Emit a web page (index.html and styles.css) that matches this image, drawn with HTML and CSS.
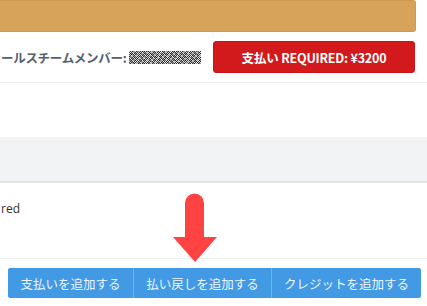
FILE: index.html
```html
<!DOCTYPE html>
<html lang="ja">
<head>
<meta charset="utf-8">
<link rel="stylesheet" href="styles.css">
</head>
<body>
<div class="page">
  <div class="banner"></div>
  <div class="member-row">
    <div class="member">
      <span class="member-label">ールスチームメンバー:</span>
      <span class="masked"></span>
    </div>
    <button class="pay-required">支払い REQUIRED: ¥3200</button>
  </div>
  <div class="spacer"></div>
  <div class="table-head"></div>
  <div class="table-body">
    <span class="status">red</span>
  </div>
  <div class="actions">
    <div class="btn-group">
      <button class="btn">支払いを追加する</button>
      <button class="btn">払い戻しを追加する</button>
      <button class="btn">クレジットを追加する</button>
    </div>
  </div>
  <svg class="arrow" width="46" height="72" viewBox="0 0 46 72">
    <path d="M12 10 a9.5 9.5 0 0 1 19 0 V44 H44 L22 69 L0 44 H12 Z" fill="#ff4343"/>
  </svg>
</div>
</body>
</html>
```

FILE: styles.css
```css
* { box-sizing: border-box; }
html, body { margin: 0; padding: 0; background: #fff; }
body {
  font-family: "Noto Sans CJK JP", "Noto Sans", sans-serif;
  width: 427px;
  height: 306px;
  overflow: hidden;
}
.page { position: relative; width: 427px; height: 306px; }
.banner {
  width: 416px;
  height: 32px;
  background: #d7a35a;
  border: 1px solid #cf9a50;
  border-left: none;
  border-radius: 0 3px 3px 0;
}
.member-row {
  display: flex;
  align-items: center;
  justify-content: space-between;
  height: 51px;
  padding: 0 12px 0 0;
  border-bottom: 1px solid #ededed;
}
.member { display: flex; align-items: center; gap: 3px; }
.member-label {
  font-size: 12.5px;
  font-weight: 700;
  color: #56606b;
  letter-spacing: -0.3px;
  padding-left: 1px;
}
.masked {
  display: inline-block;
  width: 72px;
  height: 13px;
  background:
    repeating-linear-gradient(37deg, rgba(0,0,0,0.35) 0 1px, transparent 1px 3px),
    repeating-linear-gradient(-61deg, rgba(255,255,255,0.5) 0 1px, transparent 1px 4px),
    repeating-conic-gradient(#3a3a3a 0 25%, #d8d8d8 0 50%) 0 0 / 2px 2px;
}
.pay-required {
  width: 202px;
  height: 32px;
  background: #d2191b;
  color: #fff;
  border: 1px solid #c81416;
  border-radius: 3px;
  font-family: "Noto Sans CJK JP", "Noto Sans", sans-serif;
  font-weight: 700;
  font-size: 12.5px;
  letter-spacing: -0.2px;
  padding: 0;
}
.spacer { height: 54px; }
.table-head {
  height: 46px;
  background: #f2f3f5;
  border-bottom: 2px solid #dfe5e8;
}
.table-body {
  height: 76px;
  padding-top: 16px;
  font-size: 12px;
  color: #333;
  border-bottom: 1px solid #f0f0f0;
}
.status { margin-left: 1px; font-family: "Open Sans", "Noto Sans", sans-serif; }
.actions { padding: 9px 6px 0 8px; }
.btn-group {
  display: flex;
  height: 30px;
  border-radius: 3px;
  overflow: hidden;
  background: #4299e4;
}
.btn {
  height: 30px;
  background: #4299e4;
  color: #eef5fc;
  border: none;
  border-left: 1px solid #74b4ec;
  font-family: "Noto Sans CJK JP", sans-serif;
  font-size: 12.5px;
  padding: 0;
}
.btn:first-child { border-left: none; width: 125px; }
.btn:nth-child(2) { width: 138px; }
.btn:nth-child(3) { flex: 1; }
.arrow { position: absolute; left: 173px; top: 193px; }
```
